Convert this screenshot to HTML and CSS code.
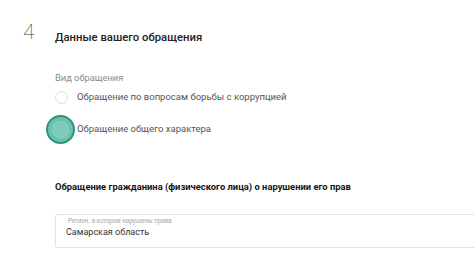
FILE: index.html
```html
<!DOCTYPE html>
<html lang="ru">
<head>
<meta charset="utf-8">
<link rel="stylesheet" href="styles.css">
</head>
<body>
<section class="step">
  <header class="step-head">
    <span class="step-num">4</span>
    <h2 class="step-title">Данные вашего обращения</h2>
  </header>
  <div class="field-group">
    <div class="group-label">Вид обращения</div>
    <label class="radio-row">
      <span class="radio"></span>
      <span class="radio-text">Обращение по вопросам борьбы с коррупцией</span>
    </label>
    <label class="radio-row radio-row-second">
      <span class="radio radio-focus"><span class="ripple"><span class="ripple-core"></span></span></span>
      <span class="radio-text">Обращение общего характера</span>
    </label>
  </div>
  <h3 class="sub-title">Обращение гражданина (физического лица) о нарушении его прав</h3>
  <div class="input-box">
    <div class="input-label">Регион, в котором нарушены права</div>
    <div class="input-value">Самарская область</div>
  </div>
</section>
</body>
</html>
```
FILE: styles.css
```css
html, body {
  margin: 0;
  padding: 0;
  background: #ffffff;
}
body {
  font-family: Roboto, "Noto Sans", Arial, sans-serif;
  overflow: hidden;
}
.step {
  padding-top: 20px;
}
.step-head {
  display: flex;
  align-items: flex-start;
  padding-left: 23px;
  margin: 0;
}
.step-num {
  width: 32px;
  font-size: 21px;
  line-height: 24px;
  font-weight: 100;
  color: #333;
}
.step-title {
  margin: 10px 0 0 0;
  font-size: 11.3px;
  line-height: 16px;
  font-weight: 500;
  color: #222;
}
.field-group {
  padding-left: 55px;
  margin-top: 25px;
}
.group-label {
  font-size: 9.3px;
  line-height: 14px;
  color: #8a8a8a;
}
.radio-row {
  display: flex;
  align-items: center;
  height: 20px;
  margin-top: 2px;
}
.radio-row-second {
  margin-top: 12px;
}
.radio {
  position: relative;
  box-sizing: border-box;
  width: 13px;
  height: 13px;
  border: 1px solid #dcdcdc;
  border-radius: 50%;
  background: #fff;
  margin-right: 9px;
  flex: none;
}
.ripple {
  position: absolute;
  left: 50%;
  top: 50%;
  width: 29px;
  height: 29px;
  margin: -14px 0 0 -16px;
  box-sizing: border-box;
  border: 2px solid #2f947d;
  border-radius: 50%;
  background: #6cc2af;
  display: flex;
  align-items: center;
  justify-content: center;
}
.ripple-core {
  width: 15px;
  height: 15px;
  border-radius: 50%;
  background: #7ecab9;
  box-shadow: 0 0 0 1px #8fd2c3;
}
.radio-text {
  font-size: 9.5px;
  color: #555;
  line-height: 20px;
}
.sub-title {
  margin: 41px 0 0 55px;
  font-size: 9.4px;
  line-height: 14px;
  font-weight: 700;
  color: #151515;
}
.input-box {
  margin: 20px -10px 0 55px;
  box-sizing: border-box;
  height: 34px;
  border: 1px solid #e2e2e2;
  border-radius: 3px;
  box-shadow: 0 1px 1px rgba(0,0,0,0.06);
  padding: 2px 0 0 10px;
}
.input-label {
  font-family: "Liberation Sans", Arial, sans-serif;
  font-size: 6.3px;
  line-height: 8px;
  color: #a5a5a5;
  padding-left: 2px;
}
.input-value {
  font-size: 9px;
  line-height: 14px;
  color: #333;
}
```
